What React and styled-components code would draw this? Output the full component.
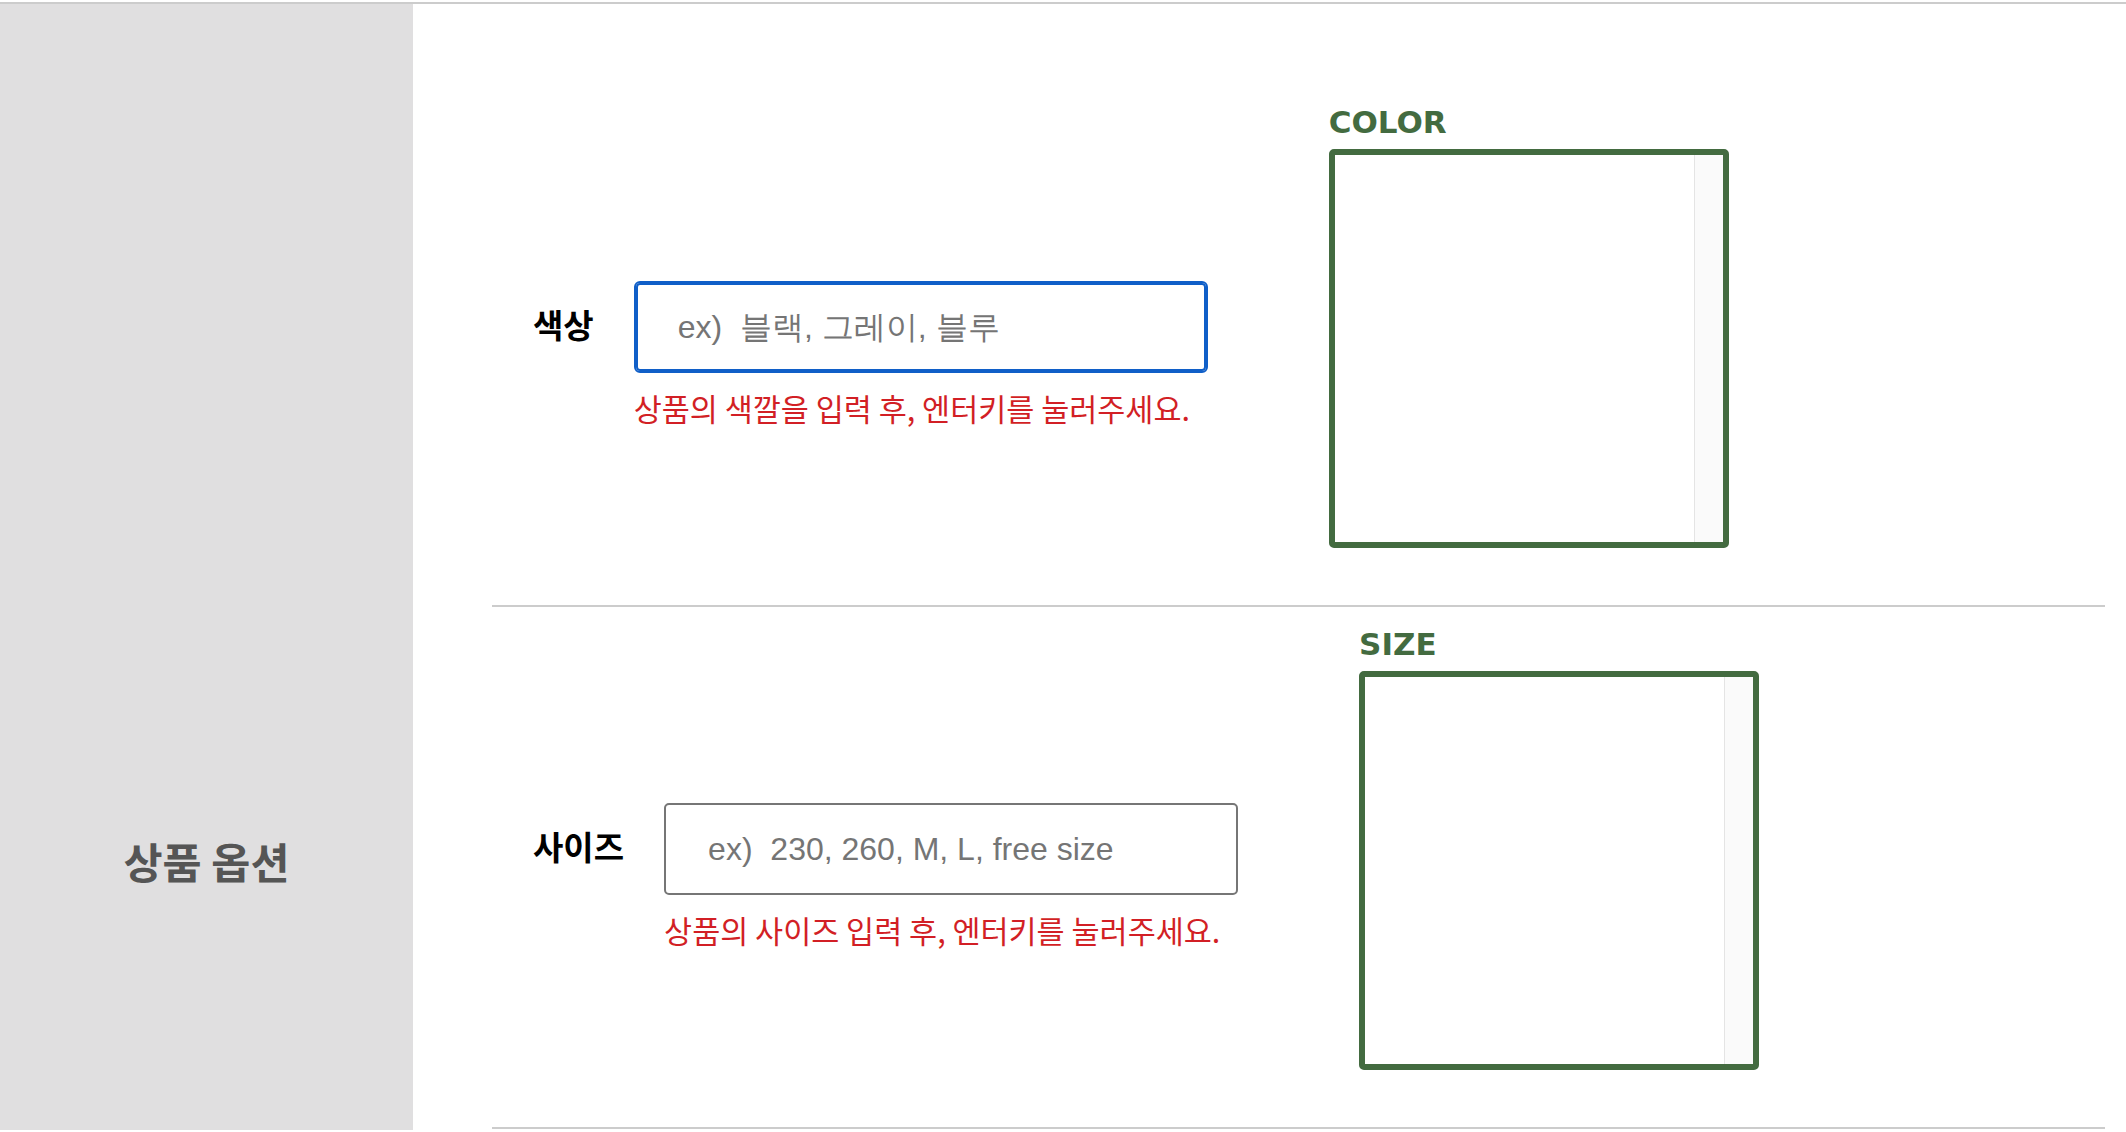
import styled, { createGlobalStyle } from "styled-components";

const GlobalStyle = createGlobalStyle`
  html, body {
    margin: 0;
    padding: 0;
    background: #ffffff;
    overflow: hidden;
  }
  * {
    box-sizing: border-box;
  }
`;

const OPTIONS = [
  {
    id: "color",
    label: "색상",
    placeholder: "ex)  블랙, 그레이, 블루",
    help: "상품의 색깔을 입력 후, 엔터키를 눌러주세요.",
    listTitle: "COLOR",
    focused: true,
  },
  {
    id: "size",
    label: "사이즈",
    placeholder: "ex)  230, 260, M, L, free size",
    help: "상품의 사이즈 입력 후, 엔터키를 눌러주세요.",
    listTitle: "SIZE",
    focused: false,
  },
];

function App() {
  return (
    <>
      <GlobalStyle />
      <Section>
        <SideTitle>
          <SideText>상품 옵션</SideText>
        </SideTitle>
        <Content>
          {OPTIONS.map((opt) => (
            <OptionRow key={opt.id}>
              <OptionLabel>{opt.label}</OptionLabel>
              <Field>
                <OptionInput
                  type="text"
                  placeholder={opt.placeholder}
                  $focused={opt.focused}
                />
                <HelpText>{opt.help}</HelpText>
              </Field>
              <ListColumn>
                <ListTitle>{opt.listTitle}</ListTitle>
                <ListBox>
                  <ListItems />
                  <ScrollTrack />
                </ListBox>
              </ListColumn>
            </OptionRow>
          ))}
        </Content>
      </Section>
    </>
  );
}

const Section = styled.div`
  display: flex;
  margin-top: 2px;
  border-top: 2px solid #cccccc;
  min-height: 1128px;
`;

const SideTitle = styled.div`
  width: 413px;
  flex-shrink: 0;
  background-color: #e0dfe0;
  padding-top: 827px;
  text-align: center;
`;

const SideText = styled.h2`
  margin: 0;
  font-family: "Noto Sans CJK KR", "Liberation Sans", sans-serif;
  font-size: 42.5px;
  line-height: 60px;
  font-weight: 700;
  color: #555555;
`;

const Content = styled.div`
  flex: 1;
  padding: 81px 21px 0 79px;
`;

const OptionRow = styled.div`
  display: flex;
  align-items: center;
  padding: 21px 0 57px 41px;
  border-bottom: 2px solid #cccccc;
`;

const OptionLabel = styled.label`
  margin: 0 40px 6px 0;
  font-family: "Noto Sans CJK KR", "Liberation Sans", sans-serif;
  font-size: 33px;
  font-weight: 700;
  color: #000000;
  white-space: nowrap;
`;

const Field = styled.div`
  display: flex;
  flex-direction: column;
  padding-top: 56px;
  margin-right: 121px;
`;

const OptionInput = styled.input`
  width: 574px;
  height: 92px;
  padding: 0 20px 0 42px;
  font-family: "Liberation Sans", Arial, sans-serif;
  font-size: 32px;
  color: #222222;
  background: #ffffff;
  outline: none;
  border: 2px solid ${(props) => (props.$focused ? "#105fc8" : "#767676")};
  border-radius: ${(props) => (props.$focused ? "6px" : "5px")};
  box-shadow: ${(props) => (props.$focused ? "inset 0 0 0 2px #105fc8" : "none")};

  &::placeholder {
    color: #757575;
  }
`;

const HelpText = styled.p`
  margin: 14px 0 0;
  font-family: "Noto Sans CJK KR", "Liberation Sans", sans-serif;
  font-size: 30.5px;
  line-height: 42px;
  color: #d21f25;
  white-space: nowrap;
`;

const ListColumn = styled.div`
  display: flex;
  flex-direction: column;
`;

const ListTitle = styled.h3`
  margin: 0 0 11px;
  font-family: "DejaVu Sans", "Liberation Sans", sans-serif;
  font-size: 31px;
  line-height: 32px;
  font-weight: 700;
  color: #436b40;
`;

const ListBox = styled.div`
  display: flex;
  width: 400px;
  height: 399px;
  border: 6px solid #436b40;
  border-radius: 5px;
  overflow: hidden;
`;

const ListItems = styled.ul`
  flex: 1;
  margin: 0;
  padding: 0;
  list-style: none;
`;

const ScrollTrack = styled.div`
  width: 29px;
  flex-shrink: 0;
  background: #fafafa;
  border-left: 1px solid #e4e4e4;
`;

export default App;
